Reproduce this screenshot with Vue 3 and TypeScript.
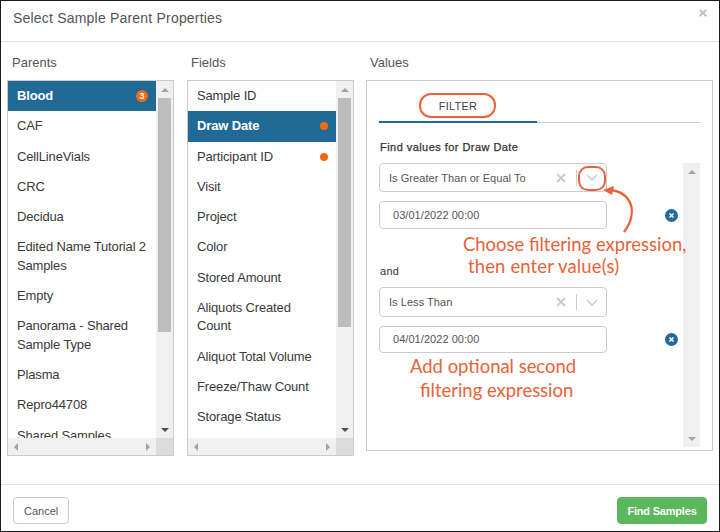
<script setup lang="ts">
interface Row { label: string; active?: boolean; dot?: boolean; count?: number }
const parents: Row[] = [
  { label: 'Blood', active: true, count: 3 },
  { label: 'CAF' }, { label: 'CellLineVials' }, { label: 'CRC' }, { label: 'Decidua' },
  { label: 'Edited Name Tutorial 2 Samples' }, { label: 'Empty' },
  { label: 'Panorama - Shared Sample Type' }, { label: 'Plasma' }, { label: 'Repro44708' },
  { label: 'Shared Samples' },
]
const fields: Row[] = [
  { label: 'Sample ID' },
  { label: 'Draw Date', active: true, dot: true },
  { label: 'Participant ID', dot: true },
  { label: 'Visit' }, { label: 'Project' }, { label: 'Color' }, { label: 'Stored Amount' },
  { label: 'Aliquots Created Count' }, { label: 'Aliquot Total Volume' },
  { label: 'Freeze/Thaw Count' }, { label: 'Storage Status' },
]
const columns = [
  { title: 'Parents', rows: parents, thumb: 234 },
  { title: 'Fields', rows: fields, thumb: 229 },
]
const clauses = [
  { op: 'Is Greater Than or Equal To', value: '03/01/2022 00:00' },
  { op: 'Is Less Than', value: '04/01/2022 00:00' },
]
</script>

<template>
  <div class="dialog">
    <header class="head">
      <h1>Select Sample Parent Properties</h1>
      <svg class="close" width="8" height="8" viewBox="0 0 8 8"><path d="M.7.7l6.6 6.6M7.3.7L.7 7.3" stroke="#c4c4c4" stroke-width="2" /></svg>
    </header>

    <main class="body">
      <section v-for="col in columns" :key="col.title" class="col">
        <h2>{{ col.title }}</h2>
        <div class="panel">
          <div class="upper">
            <ul class="list">
              <li v-for="r in col.rows" :key="r.label" :class="{ active: r.active }">
                <span class="lbl">{{ r.label }}</span>
                <span v-if="r.count" class="badge">{{ r.count }}</span>
                <span v-else-if="r.dot" class="dot"></span>
              </li>
            </ul>
            <div class="vbar">
              <span class="arr up"></span>
              <span class="thumb" :style="{ height: col.thumb + 'px' }"></span>
              <span class="spacer"></span>
              <span class="arr down"></span>
            </div>
          </div>
          <div class="hbar">
            <span class="arr left"></span>
            <span class="spacer"></span>
            <span class="arr right"></span>
            <span class="corner"></span>
          </div>
        </div>
      </section>

      <section class="col values">
        <h2>Values</h2>
        <div class="vpanel">
          <div class="tabs"><span class="tab">FILTER</span></div>
          <div class="vbody">
            <div class="form">
              <div class="find">Find values for Draw Date</div>
              <div class="clauses">
                <template v-for="(c, i) in clauses" :key="c.op">
                  <div v-if="i === 1" class="and">and</div>
                  <div class="select" :class="'s' + i">
                    <span class="op">{{ c.op }}</span>
                    <svg width="10" height="10" viewBox="0 0 10 10"><path d="M1 1l8 8M9 1L1 9" stroke="#ccc" stroke-width="2" /></svg>
                    <span class="sep"></span>
                    <svg class="chev" width="12" height="7" viewBox="0 0 12 7"><path d="M1 1l5 5 5-5" fill="none" stroke="#ccc" stroke-width="1.5" /></svg>
                  </div>
                  <div class="valrow" :class="'v' + i">
                    <div class="input">{{ c.value }}</div>
                    <svg class="rm" width="13" height="13" viewBox="0 0 13 13">
                      <circle cx="6.5" cy="6.5" r="6.5" fill="#1f6aa5" />
                      <path d="M4.5 4.5l4 4M8.5 4.5l-4 4" stroke="#fff" stroke-width="1.6" />
                    </svg>
                  </div>
                </template>
              </div>
            </div>
            <div class="vbar slim">
              <span class="arr up soft"></span>
              <span class="spacer"></span>
              <span class="arr down soft"></span>
            </div>
          </div>

          <span class="ring ring-tab"></span>
          <span class="ring ring-chev"></span>
          <svg class="arrow" width="40" height="62" viewBox="0 0 40 62">
            <path d="M8 4C22 6 32 16 28 32 27 37 24 42 21 46" fill="none" stroke="#e9623a" stroke-width="2.3" />
            <path d="M0 4L11 0 9 9z" fill="#e9623a" />
          </svg>
          <p class="note n1">Choose filtering expression,<br /><span class="in1">then enter value(s)</span></p>
          <p class="note n2">Add optional second<br /><span class="in2">filtering expression</span></p>
        </div>
      </section>
    </main>

    <footer class="foot">
      <button class="btn">Cancel</button>
      <button class="btn go">Find Samples</button>
    </footer>
  </div>
</template>

<style>
html, body { margin: 0; background: #fff; }
</style>

<style scoped>
.dialog {
  width: 720px; height: 532px; box-sizing: border-box;
  border: 1px solid #1a1a1a;
  display: flex; flex-direction: column; overflow: hidden;
  font-family: "Liberation Sans", Arial, sans-serif; font-size: 13px; color: #333; background: #fff;
}
.head {
  height: 41px; flex: none; box-sizing: border-box; border-bottom: 1px solid #e5e5e5;
  display: flex; justify-content: space-between; align-items: flex-start; padding: 9px 12px 0 12px;
}
.close { margin-top: -1px; }
h1 { margin: 0; font-size: 14px; font-weight: 400; line-height: 17px; letter-spacing: .2px; color: #555; }
.body { flex: 1; display: flex; padding: 13px 6px 0 6px; gap: 13px; }
.col { width: 167px; flex: none; }
.col h2 { margin: 0 0 9px 5px; font-size: 13px; font-weight: 400; line-height: 16px; color: #555; height: 16px; }
.col:nth-child(2) h2 { margin-left: 4px; }
.panel {
  height: 376px; box-sizing: border-box; border: 1px solid #ccc; display: flex; flex-direction: column;
}
.upper { flex: 1; display: flex; min-height: 0; }
.list { flex: 1; min-width: 0; margin: 0; padding: 0; list-style: none; overflow: hidden; font-size: 13px; letter-spacing: -.15px; line-height: 18.3px; color: #3a3a3a; }
.list li { padding: 6px 8px 6px 9px; display: flex; align-items: center; justify-content: space-between; gap: 0; }
.list li.active { background: #226a96; color: #fff; font-weight: 700; }
.badge {
  width: 12px; height: 12px; border-radius: 50%; background: #f26a12; color: #fff; font-size: 9px; font-weight: 700;
  line-height: 12px; text-align: center; flex: none; letter-spacing: 0;
}
.dot { width: 8px; height: 8px; border-radius: 50%; background: #f26a12; flex: none; }
.vbar { width: 17px; flex: none; background: #f0f0f0; display: flex; flex-direction: column; align-items: center; }
.spacer { flex: 1; }
.thumb { width: 13px; background: #bdbdbd; flex: none; }
.arr { width: 0; height: 0; flex: none; border-style: solid; border-color: transparent; }
.arr.up { border-width: 0 4px 4px; border-bottom-color: #a3a3a3; margin: 7px 0 6px; }
.arr.down { border-width: 4px 4px 0; border-top-color: #505050; margin: 6px 0 6px; }
.arr.soft.down { border-top-color: #a3a3a3; }
.hbar { height: 17px; flex: none; background: #f0f0f0; display: flex; align-items: center; }
.arr.left { border-width: 4px 4px 4px 0; border-right-color: #a3a3a3; margin-left: 6px; }
.arr.right { border-width: 4px 0 4px 4px; border-left-color: #a3a3a3; margin-right: 6px; }
.corner { width: 17px; height: 17px; background: #dcdcdc; flex: none; }

.values { width: 347px; margin-left: -1px; }
.values h2 { margin-left: 4px; }
.vpanel {
  position: relative; height: 371px; box-sizing: border-box; border: 1px solid #ccc; padding: 0 12px 3px;
  display: flex; flex-direction: column;
}
.tabs { height: 42px; flex: none; box-sizing: border-box; border-bottom: 1px solid #ccc; position: relative; }
.tab {
  position: absolute; left: 0; bottom: -1px; width: 158px; height: 28px; border-bottom: 2px solid #226a96; box-sizing: border-box;
  font-size: 11px; letter-spacing: .2px; text-align: center; line-height: 22px; color: #444;
}
.vbody { flex: 1; display: flex; min-height: 0; }
.form { flex: 1; min-width: 0; }
.find { font-size: 11px; font-weight: 400; -webkit-text-stroke: .25px #333; letter-spacing: .45px; color: #333; line-height: 14px; margin: 17px 0 9px 1px; }
.clauses { display: flex; flex-direction: column; }
.select, .input {
  width: 228px; box-sizing: border-box; border: 1px solid #ccc; border-radius: 4px; font-size: 11px; letter-spacing: .05px; color: #555;
}
.select { display: flex; align-items: center; padding: 0 8px 0 9px; }
.s0 { height: 29px; }
.s1 { height: 30px; }
.op { flex: 1; }
.sep { width: 1px; height: 16px; background: #ccc; margin: 0 9px 0 10px; }
.valrow { display: flex; align-items: center; margin-top: 9px; }
.input { line-height: 26px; padding-left: 13px; }
.v0 .input { height: 28px; }
.v1 .input { height: 27px; line-height: 25px; }
.rm { margin-left: 58px; }
.and { font-size: 11px; font-weight: 400; letter-spacing: .3px; color: #333; line-height: 14px; margin: 35px 0 9px 1px; }
.slim { height: 284px; margin-top: 40px; }
.slim .arr.up { margin: 7px 0 0; }
.ring { position: absolute; border: 2px solid #e9623a; box-sizing: border-box; pointer-events: none; }
.ring-tab { left: 52px; top: 12px; width: 77px; height: 25px; border-radius: 12px; }
.ring-chev { left: 211px; top: 85px; width: 28px; height: 25px; border-radius: 10px; }
.arrow { position: absolute; left: 236px; top: 105px; }
.note { position: absolute; margin: 0; font-family: Lato, "Open Sans", sans-serif; font-size: 18.45px; color: #e9623a; white-space: nowrap; }
.n1 { left: 96px; top: 152px; line-height: 22px; }
.in1 { margin-left: 5px; letter-spacing: .15px; }
.n2 { left: 43px; top: 273px; line-height: 24px; }
.in2 { margin-left: 10px; }

.foot {
  height: 47px; flex: none; box-sizing: border-box; border-top: 1px solid #e5e5e5;
  display: flex; justify-content: space-between; padding: 12px 12px 0;
}
.btn {
  height: 27px; box-sizing: border-box; border: 1px solid #ccc; border-radius: 4px; background: #fff; color: #555;
  font-family: inherit; font-size: 11px; padding: 0 10px;
}
.go { width: 90px; padding: 0; background: #5cb85c; border-color: #5cb85c; color: #fff; font-weight: 700; letter-spacing: -.2px; }
</style>
